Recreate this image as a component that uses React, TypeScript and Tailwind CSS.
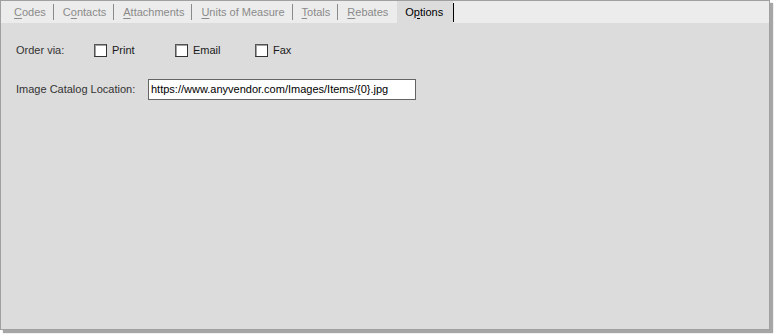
import React from 'react'

const tabs = [
  { pre: '', key: 'C', post: 'odes' },
  { pre: 'C', key: 'o', post: 'ntacts' },
  { pre: '', key: 'A', post: 'ttachments' },
  { pre: '', key: 'U', post: 'nits of Measure' },
  { pre: '', key: 'T', post: 'otals' },
  { pre: '', key: 'R', post: 'ebates' },
]

function Check({ label }: { label: string }) {
  return (
    <label className="flex items-center gap-[5px]">
      <span className="w-[13px] h-[13px] bg-white border border-[#333] border-t-[#555] border-l-[#555] shadow-[inset_1px_1px_0_#a0a0a0]" />
      <span>{label}</span>
    </label>
  )
}

export default function App() {
  return (
    <div className="w-[777px] h-[336px] bg-white" style={{ fontFamily: '"Liberation Sans", Arial, sans-serif' }}>
      <div className="w-[770px] h-[330px] border border-[#a0a0a0] bg-[#dcdcdc] shadow-[3px_3px_1px_rgba(0,0,0,0.35)] flex flex-col text-[11px] text-[#1a1a1a]">
        <div className="h-[22px] bg-[#ececec] flex items-stretch pl-[4px]">
          {tabs.map((t, i) => (
            <div key={i} className="flex items-center">
              <span className="pl-[9px] pr-[7px] text-[#8a8a8a]">
                {t.pre}
                <span className="underline underline-offset-2">{t.key}</span>
                {t.post}
              </span>
              {i < tabs.length - 1 && <span className="w-px h-[16px] bg-[#8a8a8a]" />}
            </div>
          ))}
          <div className="flex items-center bg-[#dcdcdc] ml-[2px] pl-[8px] pr-[10px] text-black">
            O<span className="underline underline-offset-2">p</span>tions
          </div>
          <div className="flex items-center">
            <span className="w-px h-[19px] bg-black" />
          </div>
        </div>
        <div className="pl-[15px] pt-[14px]">
          <div className="flex items-center h-[26px]">
            <span className="w-[78px] text-[#333]">Order via:</span>
            <div className="w-[81px]"><Check label="Print" /></div>
            <div className="w-[80px]"><Check label="Email" /></div>
            <Check label="Fax" />
          </div>
          <div className="flex items-center mt-[16px]">
            <span className="w-[132px] text-[#333]">Image Catalog Location:</span>
            <div className="w-[268px] h-[21px] bg-white border border-[#646464] flex items-center pl-[2px] text-black">
              https://www.anyvendor.com/Images/Items/{'{0}'}.jpg
            </div>
          </div>
        </div>
      </div>
    </div>
  )
}
